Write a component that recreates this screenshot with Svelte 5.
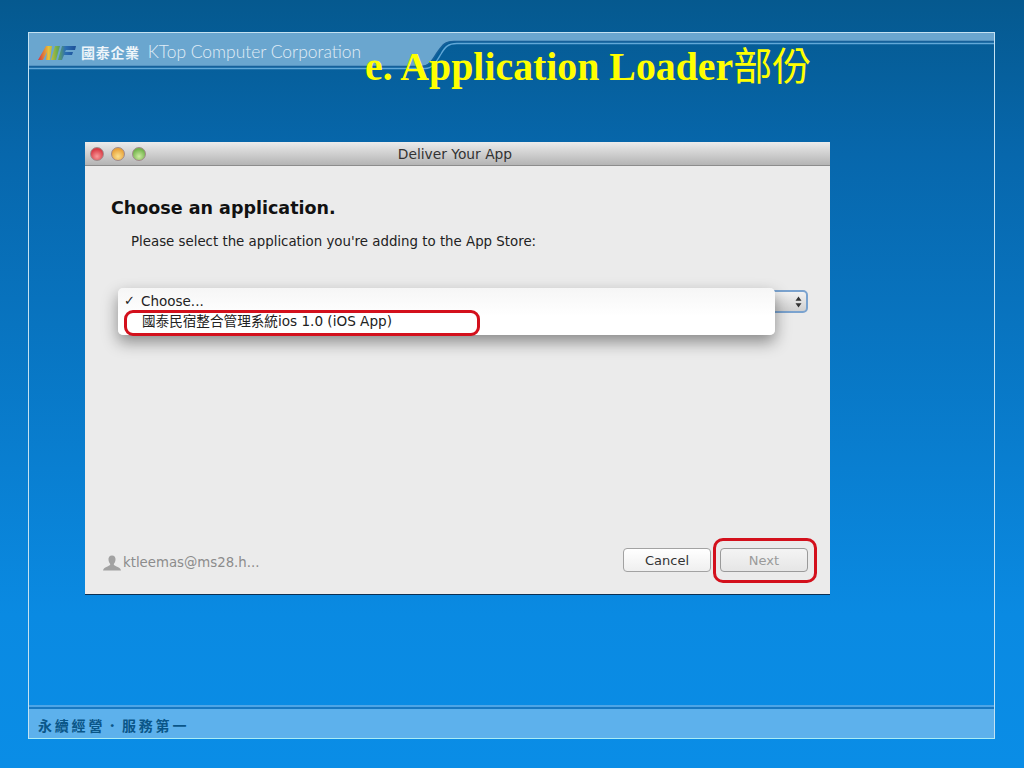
<script>
	const lights = ['red', 'amber', 'green'];
</script>

<div class="slide">
	<div class="frame">
		<header class="top">
			<svg class="band" width="965" height="38" viewBox="0 0 965 38" aria-hidden="true">
				<path d="M0 0H965V8H425C415 8 413 13 408 20C403 28 400 33 392 33H0Z" fill="#6aa6cf" />
				<path d="M0 33.500H392C400 33.500 403 28 408 20C413 13 415 8.500 425 8.500H965" fill="none" stroke="#17609a" stroke-width="1.600" />
				<path d="M0 35.500H396C404 35.500 407 29 412 21C416 14 419 10.500 428 10.500H965" fill="none" stroke="#62a8d8" stroke-width="1.400" />
			</svg>
			<div class="brand">
				<svg class="logo" width="38" height="15" viewBox="0 0 38 15" aria-hidden="true">
					<defs>
						<linearGradient id="stripe" x1="0" x2="1" y1="0" y2="0">
							<stop offset="0" stop-color="#d8323a" />
							<stop offset="0.28" stop-color="#e8c23a" />
							<stop offset="0.5" stop-color="#6fae4a" />
							<stop offset="0.72" stop-color="#2c6fb4" />
							<stop offset="1" stop-color="#1c4f96" />
						</linearGradient>
					</defs>
					<path d="M0 15L8 1H14L12 15H8L9 7L5 15Z M13 15L17 1H22L18 15Z M20 15L24 1H38L37 5H28L27 7H35L34 10H26L24 15Z" fill="url(#stripe)" />
				</svg>
				<span class="brand-zh">國泰企業</span>
				<span class="brand-en">KTop Computer Corporation</span>
			</div>
		</header>

		<h1 class="title">e. Application Loader<span class="title-zh">部份</span></h1>

		<div class="window">
			<div class="titlebar">
				<div class="lights">
					{#each lights as light}
						<span class="light {light}"></span>
					{/each}
				</div>
				<span class="window-title">Deliver Your App</span>
			</div>

			<div class="content">
				<h2>Choose an application.</h2>
				<p>Please select the application you're adding to the App Store:</p>

				<div class="picker">
					<div class="select">
						<svg width="7" height="12" viewBox="0 0 7 12" aria-hidden="true">
							<path d="M3.500 0.500L6.500 4.800H0.500Z M3.500 11.500L6.500 7.200H0.500Z" fill="#333" />
						</svg>
					</div>
					<div class="menu">
						<div class="item"><span class="check">✓</span>Choose...</div>
						<div class="item second">國泰民宿整合管理系統ios 1.0 (iOS App)</div>
					</div>
					<div class="mark mark-item"></div>
				</div>

				<div class="actions">
					<div class="account">
						<svg width="18" height="16" viewBox="0 0 18 16" aria-hidden="true">
							<path d="M9 0.500C11.500 0.500 12.800 2.500 12.500 5C12.300 7 11.400 8.300 10.800 9C10.600 10 11.500 10.700 13.500 11.400C16 12.200 17.500 13 18 15.500H0C0.500 13 2 12.200 4.500 11.400C6.500 10.700 7.400 10 7.200 9C6.600 8.300 5.700 7 5.500 5C5.200 2.500 6.500 0.500 9 0.500Z" fill="#a2a2a2" />
						</svg>
						<span>ktleemas@ms28.h...</span>
					</div>
					<button class="btn">Cancel</button>
					<div class="next-wrap">
						<button class="btn next">Next</button>
						<div class="mark mark-next"></div>
					</div>
				</div>
			</div>
		</div>

		<footer class="bottom">
			<span>永續經營．服務第一</span>
		</footer>
	</div>
</div>

<style>
	:global(body) {
		margin: 0;
	}
	* {
		box-sizing: border-box;
	}
	.slide {
		width: 1024px;
		height: 768px;
		padding: 32px 28px 28px;
		overflow: hidden;
		background: linear-gradient(#05598f 0%, #0767ac 20%, #0a8ae2 80%, #0a8de6 100%);
	}
	.frame {
		position: relative;
		display: flex;
		flex-direction: column;
		width: 967px;
		height: 707px;
		border: 1px solid #c4e2f2;
		border-bottom-color: #a8ecf6;
	}
	.top {
		position: relative;
		height: 38px;
		flex: none;
	}
	.band {
		display: block;
	}
	/* brand sits on the drawn band */
	.brand {
		position: absolute;
		left: 9px;
		top: 9px;
		display: flex;
		align-items: center;
		height: 20px;
	}
	.logo {
		margin-right: 5px;
	}
	.brand-zh {
		margin-right: 8px;
		color: #eef5fa;
		font: 700 14px/20px 'Noto Sans CJK TC', sans-serif;
		letter-spacing: 0.700px;
	}
	.brand-en {
		color: #e0edf6;
		font: 300 17.400px/20px Lato, sans-serif;
		white-space: nowrap;
	}
	.title {
		position: absolute;
		left: 336px;
		top: 8px;
		margin: 0;
		color: #ffff00;
		font: 700 39.800px/44px 'Liberation Serif', 'Noto Sans CJK TC', serif;
		white-space: nowrap;
	}
	.title-zh {
		font-family: 'Noto Sans CJK TC', sans-serif;
		font-weight: 400;
		font-size: 39px;
	}
	.window {
		flex: none;
		display: flex;
		flex-direction: column;
		width: 745px;
		height: 453px;
		margin: 71px 0 0 56px;
		background: #ebebeb;
		border-bottom: 1px solid #0b2f52;
		font-family: 'DejaVu Sans', sans-serif;
	}
	.titlebar {
		position: relative;
		display: flex;
		align-items: center;
		justify-content: center;
		flex: none;
		height: 24px;
		padding-right: 5px;
		background: linear-gradient(#ececec, #d8d8d8 35%, #b4b4b4);
		border-bottom: 1px solid #8c8c8c;
	}
	.lights {
		position: absolute;
		left: 5px;
		top: 5px;
		display: flex;
		gap: 7px;
	}
	.light {
		width: 14px;
		height: 14px;
		border-radius: 50%;
		border: 1px solid #a08a8a;
	}
	.red {
		background: radial-gradient(circle at 50% 70%, #f89a9a, #d93a44 70%);
	}
	.amber {
		background: radial-gradient(circle at 50% 70%, #fbe08e, #e9a33a 70%);
	}
	.green {
		background: radial-gradient(circle at 50% 70%, #cdeba0, #72b44c 70%);
	}
	.window-title {
		color: #333;
		font-size: 13.800px;
	}
	.content {
		display: flex;
		flex: 1;
		flex-direction: column;
		padding: 29px 22px 21px 26px;
	}
	h2 {
		margin: 0;
		color: #111;
		font-size: 17.500px;
		line-height: 26px;
		font-weight: 700;
	}
	p {
		margin: 12px 0 0 20px;
		color: #222;
		font-size: 13.350px;
		line-height: 18px;
	}
	.picker {
		position: relative;
		height: 48px;
		margin-top: 37px;
		margin-left: 7px;
	}
	.select {
		position: absolute;
		right: 0;
		top: 2px;
		display: flex;
		align-items: center;
		justify-content: flex-end;
		width: 660px;
		height: 23px;
		padding-right: 4px;
		border-radius: 5px;
		border: 2px solid #7ba3cf;
		background: linear-gradient(#f2f2f2, #d0d0d0);
	}
	.menu {
		position: absolute;
		left: 0;
		top: 0;
		width: 657px;
		height: 47px;
		padding-top: 3px;
		border-radius: 5px;
		background: linear-gradient(#f6f6f6, #ffffff 60%);
		box-shadow: 0 7px 16px rgba(0, 0, 0, 0.42);
	}
	.item {
		display: flex;
		align-items: center;
		height: 19px;
		padding-left: 23px;
		color: #222;
		font-size: 13.500px;
		white-space: nowrap;
	}
	.second {
		font-family: 'DejaVu Sans', 'Noto Sans CJK TC', sans-serif;
		font-size: 13.600px;
		padding-left: 24px;
	}
	.check {
		position: absolute;
		left: 6px;
		font-size: 13px;
		font-weight: 700;
	}
	.mark {
		position: absolute;
		border: 3.500px solid #d3101c;
		pointer-events: none;
	}
	.mark-item {
		left: 6px;
		top: 22px;
		width: 356px;
		height: 26px;
		border-radius: 9px;
	}
	.actions {
		display: flex;
		align-items: center;
		margin-top: auto;
		padding-bottom: 1px;
	}
	.account {
		display: flex;
		align-items: center;
		gap: 2px;
		margin: 5px auto 0 -8px;
		color: #8c8c8c;
		font-size: 13.300px;
	}
	.btn {
		width: 88px;
		height: 24px;
		padding: 0;
		border: 1px solid #a2a2a2;
		border-radius: 4px;
		background: linear-gradient(#ffffff, #efefef);
		color: #333;
		font: 13px 'DejaVu Sans', sans-serif;
	}
	.next-wrap {
		position: relative;
		margin-left: 9px;
	}
	.next {
		display: block;
		border-color: #9a9a9a;
		background: linear-gradient(#f4f4f4, #e6e6e6);
		color: #9a9a9a;
	}
	.mark-next {
		left: -7px;
		top: -10px;
		width: 104px;
		height: 45px;
		border-width: 3.500px;
		border-radius: 10px;
	}
	.bottom {
		display: flex;
		align-items: center;
		height: 33px;
		margin-top: auto;
		padding: 4px 0 0 9px;
		background: #5db1ec;
		border-top: 2px solid #4ea5e6;
		box-shadow: inset 0 2px 0 #1778c2;
		color: #0a5688;
		font: 700 14px/20px 'Noto Sans CJK TC', sans-serif;
		letter-spacing: 2.800px;
	}
</style>
